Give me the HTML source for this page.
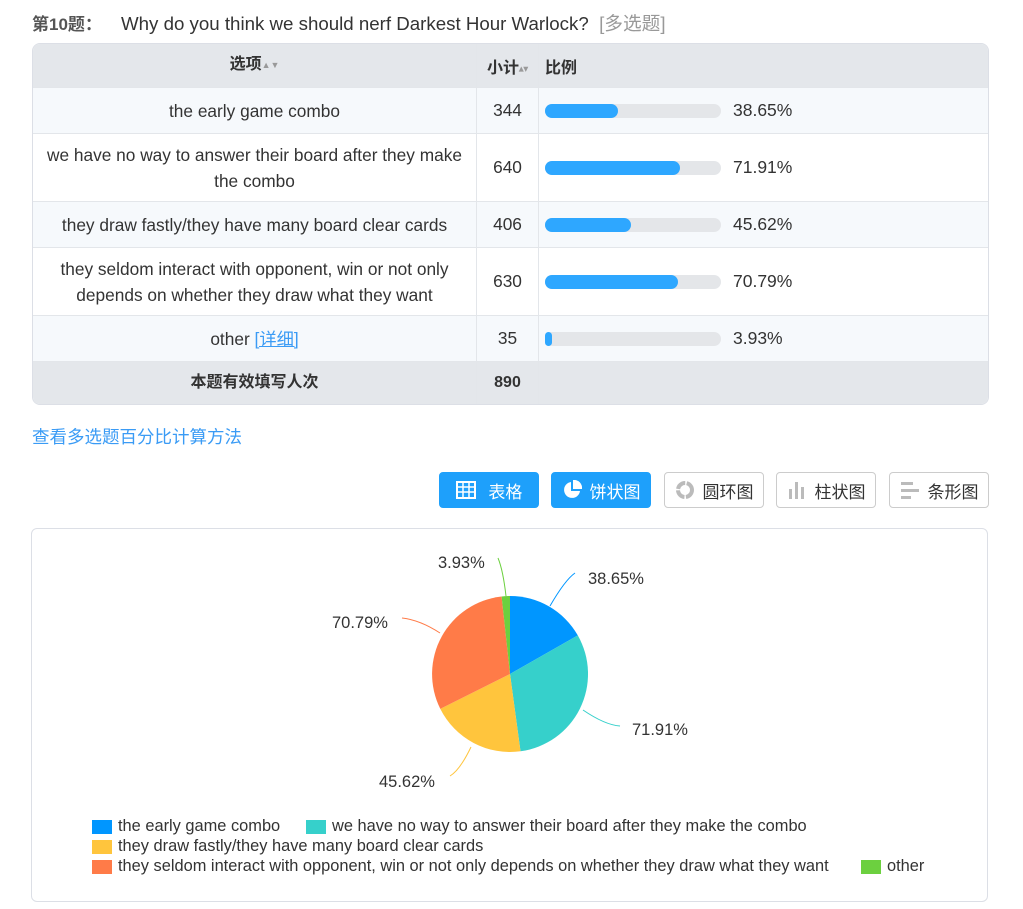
<!DOCTYPE html>
<html><head><meta charset="utf-8"><style>
body{margin:0;background:#fff;font-family:"Liberation Sans","Noto Sans CJK SC",sans-serif;color:#333;width:1023px;height:909px;overflow:hidden;position:relative}
.t{position:absolute;left:32px;top:9px;font-size:18.7px;color:#333;white-space:nowrap}
.t b{color:#555;font-size:17px;display:inline-block;width:89px}
.t span{color:#999}
table{position:absolute;left:32px;top:43px;width:957px;table-layout:fixed;border-collapse:separate;border-spacing:0;border:1px solid #dcdfe6;border-radius:8px;overflow:hidden;font-size:17.3px}
td,th{border-right:1px solid #e3e6ea;border-bottom:1px solid #e3e6ea;padding:0 6px;vertical-align:middle}
td:last-child,th:last-child{border-right:none}
tr:last-child td{border-bottom:none}
th{background:#e4e7eb;height:43px;font-weight:bold;font-size:16px}
.foot td{background:#e4e7eb;font-weight:bold;height:42px;font-size:16px}
tr.a td{background:#f6f9fc}
.c1{text-align:center;line-height:26px;padding:0 4px}
.c2{text-align:center;padding:0 2px}
.pc{font-size:17.5px}
.bar{display:inline-block;width:176px;height:14px;background:#e4e6e9;border-radius:7px;vertical-align:middle;position:relative;margin-right:12px}
.bar i{position:absolute;left:0;top:0;height:14px;background:#2ea7ff;border-radius:7px}
.ar{font-size:9px;color:#999;vertical-align:middle}
.link{position:absolute;left:32px;top:424px;font-size:17.5px;color:#3a9bf5}
.btn{position:absolute;top:472px;height:36px;border:1px solid #ccc;border-radius:4px;box-sizing:border-box;font-size:17px;display:flex;align-items:center;justify-content:center;gap:8px;color:#333}
.btn.on{background:#1ea0fb;border-color:#1ea0fb;color:#fff}
.box{position:absolute;left:31px;top:528px;width:957px;height:374px;border:1px solid #dcdfe6;border-radius:6px;box-sizing:border-box}
.lg{position:absolute;font-size:16.4px;color:#333;display:flex;align-items:center}
.lg i{display:inline-block;width:20px;height:14px;margin-right:6px}
</style></head><body>
<div class="t"><b>第10题：</b>Why do you think we should nerf Darkest Hour Warlock? &nbsp;<span>[多选题]</span></div>
<table>
<colgroup><col style="width:444px"><col style="width:62px"><col></colgroup>
<tr><th class="c1">选项<span class="ar">▲▼</span></th><th class="c2">小计<span class="ar">▴▾</span></th><th style="text-align:left">比例</th></tr>
<tr class="a" style="height:46px"><td class="c1">the early game combo</td><td class="c2">344</td><td class="pc"><span class="bar"><i style="width:73px"></i></span>38.65%</td></tr>
<tr style="height:68px"><td class="c1">we have no way to answer their board after they make the combo</td><td class="c2">640</td><td class="pc"><span class="bar"><i style="width:135px"></i></span>71.91%</td></tr>
<tr class="a" style="height:46px"><td class="c1">they draw fastly/they have many board clear cards</td><td class="c2">406</td><td class="pc"><span class="bar"><i style="width:86px"></i></span>45.62%</td></tr>
<tr style="height:68px"><td class="c1">they seldom interact with opponent, win or not only depends on whether they draw what they want</td><td class="c2">630</td><td class="pc"><span class="bar"><i style="width:133px"></i></span>70.79%</td></tr>
<tr class="a" style="height:46px"><td class="c1">other <span style="color:#3a9bf5;text-decoration:underline">[详细]</span></td><td class="c2">35</td><td class="pc"><span class="bar"><i style="width:7px"></i></span>3.93%</td></tr>
<tr class="foot"><td class="c1">本题有效填写人次</td><td class="c2">890</td><td></td></tr>
</table>
<div class="link">查看多选题百分比计算方法</div>
<div class="btn on" style="left:439px;width:100px"><svg width="20" height="18" viewBox="0 0 20 18"><rect x="1" y="1" width="18" height="16" fill="none" stroke="#fff" stroke-width="2"/><path d="M1 6H19M1 11H19M7 1V17M13 1V17" stroke="#fff" stroke-width="1.5"/></svg>&nbsp;表格</div>
<div class="btn on" style="left:551px;width:100px"><svg width="20" height="20" viewBox="0 0 20 20"><path d="M9 2A8 8 0 1 0 18 11H9Z" fill="#fff"/><path d="M11 0A8 8 0 0 1 20 9H11Z" fill="#fff"/></svg>饼状图</div>
<div class="btn" style="left:664px;width:100px"><svg width="20" height="20" viewBox="0 0 20 20"><circle cx="10" cy="10" r="7" fill="none" stroke="#bbb" stroke-width="4" stroke-dasharray="10 1.5"/></svg>圆环图</div>
<div class="btn" style="left:776px;width:100px"><svg width="20" height="20" viewBox="0 0 20 20"><rect x="2" y="9" width="3" height="10" fill="#bbb"/><rect x="8" y="2" width="3" height="17" fill="#bbb"/><rect x="14" y="7" width="3" height="12" fill="#bbb"/></svg>柱状图</div>
<div class="btn" style="left:889px;width:100px"><svg width="20" height="20" viewBox="0 0 20 20"><rect x="1" y="2" width="12" height="3" fill="#bbb"/><rect x="1" y="9" width="18" height="3" fill="#bbb"/><rect x="1" y="16" width="10" height="3" fill="#bbb"/></svg>条形图</div>
<div class="box"></div>
<svg style="position:absolute;left:0;top:0" width="1023" height="909" font-family="Liberation Sans" font-size="16.5" fill="#333">
<path d="M510 674L510 596A78 78 0 0 1 577.8 635.4Z" fill="#0096ff"/>
<path d="M510 674L577.8 635.4A78 78 0 0 1 520.5 751.3Z" fill="#36d0cb"/>
<path d="M510 674L520.5 751.3A78 78 0 0 1 440.3 708.9Z" fill="#ffc53d"/>
<path d="M510 674L440.3 708.9A78 78 0 0 1 501.6 596.5Z" fill="#ff7b48"/>
<path d="M510 674L501.6 596.5A78 78 0 0 1 510 596Z" fill="#6cd03f"/>
<g fill="none" stroke-width="1">
<path d="M550 606Q565 580 575 573" stroke="#0096ff"/>
<path d="M583 710Q605 725 620 726" stroke="#36d0cb"/>
<path d="M471 747Q460 770 450 776" stroke="#ffc53d"/>
<path d="M440 633Q420 620 402 618" stroke="#ff7b48"/>
<path d="M506 596Q503 570 498 558" stroke="#6cd03f"/>
</g>
<text x="588" y="584">38.65%</text>
<text x="632" y="735">71.91%</text>
<text x="379" y="787">45.62%</text>
<text x="332" y="628">70.79%</text>
<text x="438" y="568">3.93%</text>
</svg>
<div class="lg" style="left:92px;top:817px"><i style="background:#0096ff"></i>the early game combo</div>
<div class="lg" style="left:306px;top:817px"><i style="background:#36d0cb"></i>we have no way to answer their board after they make the combo</div>
<div class="lg" style="left:92px;top:837px"><i style="background:#ffc53d"></i>they draw fastly/they have many board clear cards</div>
<div class="lg" style="left:92px;top:857px"><i style="background:#ff7b48"></i>they seldom interact with opponent, win or not only depends on whether they draw what they want</div>
<div class="lg" style="left:861px;top:857px"><i style="background:#6cd03f"></i>other</div>
</body></html>
